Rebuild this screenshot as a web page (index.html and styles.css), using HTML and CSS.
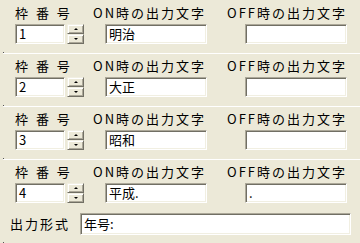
FILE: index.html
```html
<!DOCTYPE html>
<html lang="ja">
<head>
<meta charset="utf-8">
<link rel="stylesheet" href="styles.css">
</head>
<body>
<div class="panel">
  <div class="group">
    <div class="lbl lbl-no">枠 番 号</div>
    <div class="lbl lbl-on">ON時の出力文字</div>
    <div class="lbl lbl-off">OFF時の出力文字</div>
    <div class="numcell"><div class="field num">1</div><div class="spin"><div class="sbtn"><span class="up"></span></div><div class="sbtn"><span class="down"></span></div></div></div>
    <div class="field on">明治</div>
    <div class="field off"></div>
  </div>
  <div class="sep"></div>
  <div class="group">
    <div class="lbl lbl-no">枠 番 号</div>
    <div class="lbl lbl-on">ON時の出力文字</div>
    <div class="lbl lbl-off">OFF時の出力文字</div>
    <div class="numcell"><div class="field num">2</div><div class="spin"><div class="sbtn"><span class="up"></span></div><div class="sbtn"><span class="down"></span></div></div></div>
    <div class="field on">大正</div>
    <div class="field off"></div>
  </div>
  <div class="sep"></div>
  <div class="group">
    <div class="lbl lbl-no">枠 番 号</div>
    <div class="lbl lbl-on">ON時の出力文字</div>
    <div class="lbl lbl-off">OFF時の出力文字</div>
    <div class="numcell"><div class="field num">3</div><div class="spin"><div class="sbtn"><span class="up"></span></div><div class="sbtn"><span class="down"></span></div></div></div>
    <div class="field on">昭和</div>
    <div class="field off"></div>
  </div>
  <div class="sep"></div>
  <div class="group last">
    <div class="lbl lbl-no">枠 番 号</div>
    <div class="lbl lbl-on">ON時の出力文字</div>
    <div class="lbl lbl-off">OFF時の出力文字</div>
    <div class="numcell"><div class="field num">4</div><div class="spin"><div class="sbtn"><span class="up"></span></div><div class="sbtn"><span class="down"></span></div></div></div>
    <div class="field on">平成.</div>
    <div class="field off">.</div>
  </div>
  <div class="outrow">
    <div class="lbl lbl-out">出力形式</div>
    <div class="field out">年号:</div>
  </div>
  <div class="enddot"></div>
</div>
</body>
</html>
```
FILE: styles.css
```css
html, body {
  margin: 0;
  padding: 0;
  background: #ece9d8;
}
body {
  width: 360px;
  height: 243px;
  overflow: hidden;
  font-family: "Noto Sans CJK JP", "Noto Sans", sans-serif;
  font-size: 13px;
  color: #000;
}
.panel {
  padding-top: 1px;
}
.group {
  display: grid;
  grid-template-columns: 78px 134px 1fr;
  grid-template-rows: 16px 20px;
  row-gap: 3px;
  padding: 4px 0 8px 15px;
}
.group.last {
  padding-bottom: 8px;
}
.lbl {
  line-height: 16px;
  white-space: nowrap;
}
.lbl-no {
  word-spacing: 5px;
}
.lbl-on, .lbl-off {
  letter-spacing: 2px;
}
.lbl-out {
  letter-spacing: 2px;
}
.numcell {
  display: flex;
  gap: 2px;
}
.field {
  box-sizing: border-box;
  height: 20px;
  background: #fff;
  border-top: 1px solid #aca899;
  border-left: 1px solid #aca899;
  border-right: 1px solid #fff;
  border-bottom: 1px solid #fff;
  box-shadow: inset 1px 1px 0 #716f64, inset -1px -1px 0 #f1efe2;
  padding: 0 3px;
  line-height: 18px;
  white-space: nowrap;
  overflow: hidden;
}
.field.num {
  width: 50px;
}
.field.on {
  width: 102px;
  margin-left: 12px;
}
.field.off {
  width: 102px;
  margin-left: 18px;
}
.spin {
  display: flex;
  flex-direction: column;
  width: 17px;
  height: 20px;
}
.sbtn {
  box-sizing: border-box;
  height: 10px;
  background: #ece9d8;
  border-top: 1px solid #f1efe2;
  border-left: 1px solid #f1efe2;
  border-right: 1px solid #716f64;
  border-bottom: 1px solid #716f64;
  box-shadow: inset 1px 1px 0 #fff, inset -1px -1px 0 #aca899;
  display: flex;
  align-items: center;
  justify-content: center;
}
.up {
  width: 0;
  height: 0;
  border-left: 2px solid transparent;
  border-right: 2px solid transparent;
  border-bottom: 2px solid #000;
}
.down {
  width: 0;
  height: 0;
  border-left: 2px solid transparent;
  border-right: 2px solid transparent;
  border-top: 2px solid #000;
}
.sep {
  height: 1px;
  margin-left: 3px;
  border-bottom: 1px solid #fff;
}
.sep::before, .enddot::before {
  content: "";
  display: block;
  width: 1px;
  height: 1px;
  background: #555;
}
.outrow {
  display: flex;
  align-items: center;
  padding: 2px 0 0 10px;
  height: 22px;
}
.field.out {
  width: 271px;
  height: 22px;
  line-height: 20px;
  margin-left: 10px;
}
.enddot {
  margin: 7px 0 0 3px;
}
```
